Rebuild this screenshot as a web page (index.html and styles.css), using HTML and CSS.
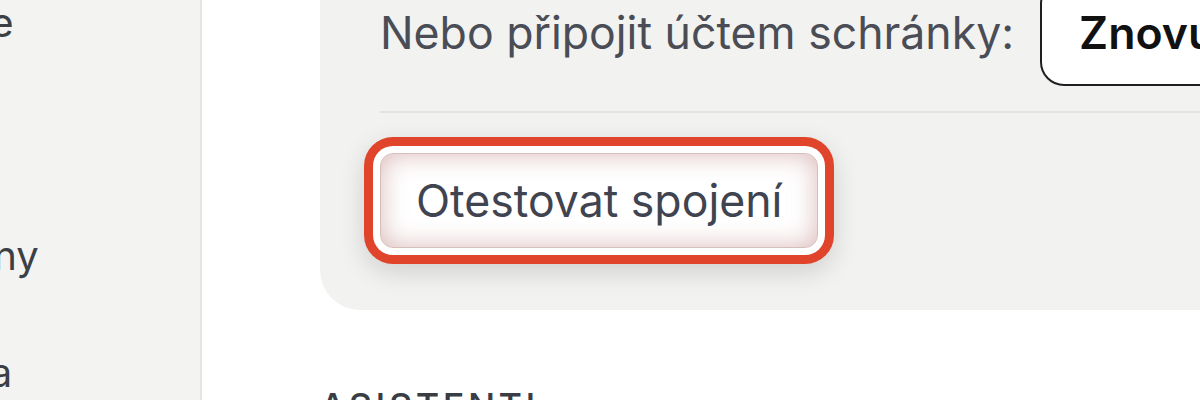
FILE: index.html
```html
<!DOCTYPE html>
<html lang="cs">
<head>
<meta charset="utf-8">
<link rel="stylesheet" href="styles.css">
</head>
<body>
<aside class="sidebar">
  <nav class="nav">
    <div class="nav-item">Tabule</div>
    <div class="nav-item">Účet</div>
    <div class="nav-item">Šablony</div>
    <div class="nav-item">Složka</div>
  </nav>
</aside>
<main class="main">
  <section class="card">
    <div class="row">
      <span class="label">Nebo připojit účtem schránky:</span>
      <button class="btn-outline">Znovu připojit</button>
    </div>
    <hr class="divider">
    <button class="btn-test">Otestovat spojení</button>
  </section>
  <h2 class="section-title">Asistenti</h2>
</main>
</body>
</html>
```
FILE: styles.css
```css
* { box-sizing: border-box; }
html, body { margin: 0; height: 400px; overflow: hidden; }
body {
  display: flex;
  font-family: Inter, "Noto Sans", sans-serif;
  background: #ffffff;
}
.sidebar {
  width: 202px;
  flex: none;
  background: #f3f3f1;
  border-right: 2px solid #e5e5e3;
  overflow: hidden;
}
.nav {
  margin-left: -113px;
  margin-top: -36px;
  width: 400px;
}
.nav-item {
  height: 116.7px;
  display: flex;
  align-items: center;
  font-size: 40px;
  color: #3c3f46;
  white-space: nowrap;
}
.main {
  flex: 1;
  padding-left: 118px;
  min-width: 0;
}
.card {
  background: #f2f2f0;
  border-radius: 0 0 40px 40px;
  margin-top: -30px;
  padding: 10px 0 62px 60px;
  width: 1000px;
}
.row {
  display: flex;
  align-items: center;
  gap: 26px;
  white-space: nowrap;
}
.label {
  font-size: 44.6px;
  color: #4a4d55;
}
.btn-outline {
  font-family: inherit;
  font-size: 44.6px;
  font-weight: 600;
  color: #111;
  background: #fff;
  border: 2px solid #1f1f1f;
  border-radius: 24px;
  height: 106px;
  padding: 0 37px;
  white-space: nowrap;
}
.divider {
  border: 0;
  border-top: 2px solid #e2e2e0;
  margin: 25px 0 40px 0;
}
.btn-test {
  font-family: inherit;
  font-size: 44.6px;
  color: #3f4450;
  background: #fff;
  border: 1px solid #d6bebc;
  border-radius: 13px;
  height: 95px;
  padding: 0 35px;
  box-shadow:
    inset 0 0 26px rgba(196, 146, 144, 0.65),
    0 0 0 7px #ffffff,
    0 0 0 16px #e0452b,
    0 8px 26px 16px rgba(0, 0, 0, 0.14);
}
.section-title {
  margin: 74px 0 0 0;
  font-size: 36px;
  font-weight: 500;
  letter-spacing: 3.5px;
  text-transform: uppercase;
  color: #3a3d44;
}
```
